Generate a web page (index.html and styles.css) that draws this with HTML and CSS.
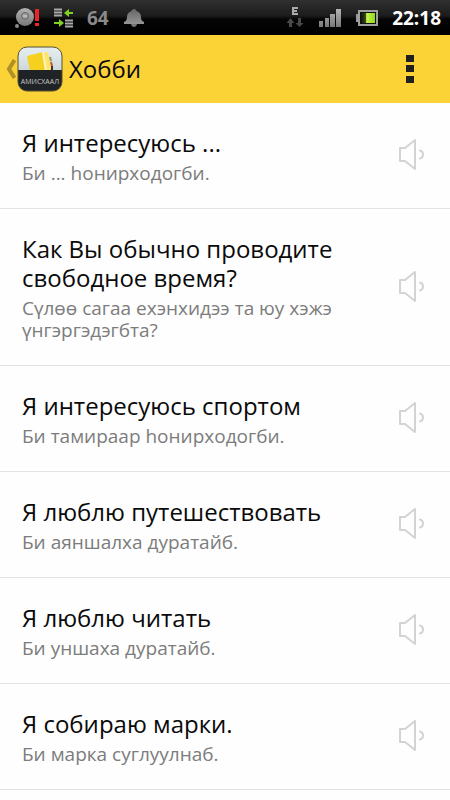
FILE: index.html
```html
<!DOCTYPE html>
<html lang="ru">
<head>
<meta charset="utf-8">
<meta name="viewport" content="width=device-width, initial-scale=1">
<title>Хобби</title>
<link rel="stylesheet" href="styles.css">
</head>
<body>
<svg class="defs" aria-hidden="true">
  <defs>
    <linearGradient id="metal" x1="0" y1="0" x2="0" y2="1"><stop offset="0" stop-color="#b4b4b4"/><stop offset="1" stop-color="#777"/></linearGradient>
    <linearGradient id="bell" x1="0" y1="0" x2="0" y2="1"><stop offset="0" stop-color="#666"/><stop offset="1" stop-color="#959595"/></linearGradient>
    <linearGradient id="paper" x1="0" y1="0" x2="0" y2="1"><stop offset="0" stop-color="#e6eef0"/><stop offset="1" stop-color="#b9c6cb"/></linearGradient>
    <linearGradient id="charge" x1="0" y1="0" x2="1" y2="0"><stop offset="0" stop-color="#111"/><stop offset=".35" stop-color="#3a5208"/><stop offset=".4" stop-color="#c8f25a"/><stop offset="1" stop-color="#8fdc10"/></linearGradient>
    <symbol id="speaker" viewBox="0 0 28 34">
      <path d="M2 9h5L17 1v29L7 22H2z" fill="none" stroke="#d3d3d3" stroke-width="2" stroke-linejoin="round"/>
      <path d="M22 11.500c4 1 4 7 0 8" fill="none" stroke="#d3d3d3" stroke-width="2" stroke-linecap="round"/>
    </symbol>
  </defs>
</svg>
<div class="status">
  <div class="status-group notices">
    <svg width="26" height="22" viewBox="0 0 26 22">
      <circle cx="10" cy="10" r="9" fill="url(#metal)"/>
      <circle cx="2" cy="19" r="2" fill="#8c8c8c"/>
      <circle cx="10" cy="9" r="3.500" fill="#999" stroke="#666" stroke-width="1"/>
      <path d="M8 9h4" stroke="#ddd"/>
      <path d="M20 2h4v12h-4zM20 16h4v3h-4z" fill="#e8252b"/>
    </svg>
    <svg width="20" height="20" viewBox="0 0 20 20">
      <path d="M0 1.500h8M0 4.500h8M0 7.500h8M11 12.500h8M11 15.500h8M11 18.500h8" stroke="#aaa" stroke-width="2"/>
      <path d="M10 5l5-4v3h4v2h-4v3zM10 15l-5-4v3H0v2h5v3z" fill="#7fd321"/>
    </svg>
    <span class="temp">64</span>
    <svg class="bell" width="20" height="20" viewBox="0 0 20 20">
      <path d="M10 1c-1.500 0-2.500 1-2.500 2-3 1-4.500 3-4.500 6 0 3-1 4-3 5v2h20v-2c-2-1-3-2-3-5 0-3-1.500-5-4.500-6 0-1-1-2-2.500-2z" fill="url(#bell)"/>
      <path d="M7 16h6c-.5 4-5.500 4-6 0z" fill="#777"/>
    </svg>
  </div>
  <div class="status-group system">
    <svg width="18" height="22" viewBox="0 0 18 22">
      <path d="M12 1H7v6h5M7 4h4" fill="none" stroke="#aaa" stroke-width="2"/>
      <path d="M4.500 11l4 5H6v4H3v-4H.5zM13.500 20l4-4H15v-5h-3v5H9.500z" fill="#494949"/>
    </svg>
    <svg width="24" height="20" viewBox="0 0 24 20">
      <path d="M1 13h4v6H1zM7 10h4v9H7zM12 6h5v13h-5zM18 1h5v18h-5z" fill="url(#metal)"/>
    </svg>
    <svg width="22" height="16" viewBox="0 0 22 16">
      <path d="M0 4h3v8H0z" fill="#999"/>
      <rect x="3" y="1" width="18" height="14" fill="#111" stroke="#a0a0a0" stroke-width="2"/>
      <rect x="5" y="3" width="14" height="10" fill="url(#charge)"/>
    </svg>
    <time class="clock">22:18</time>
  </div>
</div>
<header class="bar">
  <a class="back" href="#" aria-label="Назад">
    <svg width="10" height="20" viewBox="0 0 10 20"><path d="M8.500 1L3 10l5.500 9" fill="none" stroke="#ae9028" stroke-width="4"/></svg>
    <svg width="46" height="46" viewBox="0 0 46 46">
      <rect x="1" y="1" width="44" height="44" rx="9" fill="url(#paper)"/>
      <path d="M25 7l6-1 4 19h-7z" fill="#ffe36a"/>
      <path d="M10 10l16-4 3 19H13z" fill="#f5d020"/>
      <path d="M26 6l3 19" stroke="#fff5c0" stroke-width="2"/>
      <path d="M33 11l1 4" stroke="#8d9a62" stroke-width="2"/><path d="M34 16l1 4" stroke="#c9563b" stroke-width="2"/><path d="M35 20v4" stroke="#30363a" stroke-width="2"/>
      <path d="M1 24h44v12a9 9 0 0 1-9 9H10a9 9 0 0 1-9-9z" fill="#202325"/>
      <rect x="1" y="1" width="44" height="44" rx="9" fill="none" stroke="#575031"/>
      <text class="logo-text" x="23" y="38" text-anchor="middle">АМИСХААЛ</text>
    </svg>
  </a>
  <h1 class="heading">Хобби</h1>
  <button class="menu" type="button" aria-label="Меню">
    <svg width="8" height="28" viewBox="0 0 8 28"><path d="M0 0h8v7H0zM0 10h8v7H0zM0 21h8v7H0z" fill="#20201f"/></svg>
  </button>
</header>
<main>
  <ul class="phrases">
    <li class="phrase"><div class="words"><h2>Я интересуюсь ...</h2><p>Би ... һонирходогби.</p></div><button class="play" type="button" aria-label="Прослушать"><svg width="28" height="34"><use href="#speaker"/></svg></button></li>
    <li class="phrase"><div class="words"><h2>Как Вы обычно проводите свободное время?</h2><p>Сүлөө сагаа ехэнхидээ та юу хэжэ үнгэргэдэгбта?</p></div><button class="play" type="button" aria-label="Прослушать"><svg width="28" height="34"><use href="#speaker"/></svg></button></li>
    <li class="phrase"><div class="words"><h2>Я интересуюсь спортом</h2><p>Би тамираар һонирходогби.</p></div><button class="play" type="button" aria-label="Прослушать"><svg width="28" height="34"><use href="#speaker"/></svg></button></li>
    <li class="phrase"><div class="words"><h2>Я люблю путешествовать</h2><p>Би аяншалха дуратайб.</p></div><button class="play" type="button" aria-label="Прослушать"><svg width="28" height="34"><use href="#speaker"/></svg></button></li>
    <li class="phrase"><div class="words"><h2>Я люблю читать</h2><p>Би уншаха дуратайб.</p></div><button class="play" type="button" aria-label="Прослушать"><svg width="28" height="34"><use href="#speaker"/></svg></button></li>
    <li class="phrase"><div class="words"><h2>Я собираю марки.</h2><p>Би марка суглуулнаб.</p></div><button class="play" type="button" aria-label="Прослушать"><svg width="28" height="34"><use href="#speaker"/></svg></button></li>
  </ul>
</main>
</body>
</html>
```
FILE: styles.css
```css
* { box-sizing: border-box; }
body {
  margin: 0;
  background: #fefefe;
  color: #0a0a0a;
  font-family: "Open Sans", "Noto Sans", sans-serif;
}
svg { display: block; flex: none; }
.defs { position: absolute; width: 0; height: 0; }
h1, h2, p, ul { margin: 0; padding: 0; font-weight: 400; }
button { border: 0; padding: 0; background: none; cursor: pointer; }

.status {
  display: flex;
  justify-content: space-between;
  align-items: center;
  height: 35px;
  padding: 0 9px 0 15px;
  background: linear-gradient(#303030, #1c1c1c 45%, #050505 55%, #000);
}
.status-group { display: flex; align-items: center; }
.notices { gap: 13px; }
.system { gap: 14px; }
.temp { color: #8a8a8a; font-size: 19px; font-weight: 700; line-height: 24px; }
.bell { margin-left: 2px; }
.clock { color: #fff; font-size: 19px; font-weight: 700; line-height: 24px; }

.bar {
  display: flex;
  align-items: center;
  height: 68px;
  padding: 0 28px 0 6px;
  background: #fcd336;
}
.back { display: flex; align-items: center; gap: 1px; }
.logo-text { fill: #c9c9c9; font-size: 7px; }
.heading { flex: 1; margin-left: 6px; font-size: 24px; line-height: 32px; }
.menu { display: flex; justify-content: center; width: 24px; }

.phrases { list-style: none; }
.phrase {
  display: flex;
  align-items: center;
  gap: 20px;
  padding: 25px 24px 24px 22px;
  border-bottom: 1px solid #e2e2e2;
}
.words { flex: 1; }
.words h2 { margin-bottom: 5px; font-size: 24px; line-height: 29px; }
.words p { color: #7c7c7c; font-size: 19px; line-height: 22px; }
```
